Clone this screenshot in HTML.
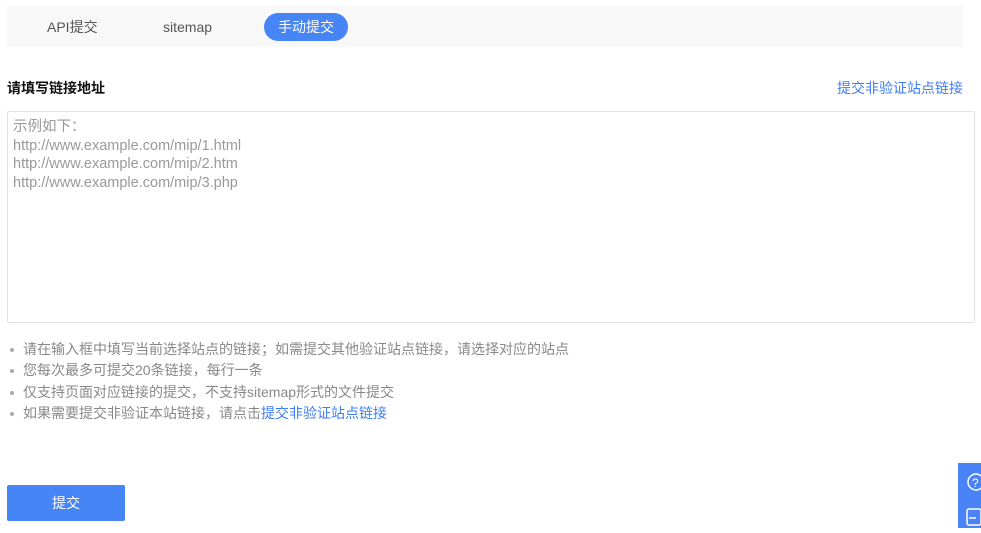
<!DOCTYPE html>
<html><head><meta charset="utf-8"><style>
body{margin:0;width:981px;height:528px;background:#fff;position:relative;overflow:hidden;font-family:"Liberation Sans","Noto Sans CJK SC",sans-serif;}
.tabs{position:absolute;left:7px;top:6px;width:956px;height:41px;background:#f8f8f8;}
.t{position:absolute;top:1px;line-height:41px;font-size:14px;color:#555;}
.pill{position:absolute;left:257px;top:7px;width:84px;height:28px;border-radius:14px;background:#4585f5;color:#fff;font-size:14px;line-height:28px;text-align:center;}
.lbl{position:absolute;left:7px;top:78px;font-size:14px;font-weight:bold;color:#111;}
.lnk{position:absolute;right:18px;top:78px;font-size:14px;color:#3f7ef5;}
.ta{position:absolute;left:7px;top:111px;width:966px;height:210px;border:1px solid #e2e2e2;border-radius:2px;}
.ta div{position:absolute;left:5px;top:6px;font-size:14.5px;line-height:18.5px;color:#999;}
ul{position:absolute;left:7px;top:339px;margin:0;padding:0;list-style:none;font-size:14px;color:#888;}
li{line-height:21.3px;padding-left:16px;position:relative;}
li:before{content:"";position:absolute;left:3px;top:9px;width:4px;height:4px;border-radius:50%;background:#aaa;}
li a{color:#3f7ef5;}
.btn{position:absolute;left:7px;top:485px;width:118px;height:36px;background:#4585f5;color:#fff;font-size:14px;line-height:36px;text-align:center;border-radius:2px;}
.side{position:absolute;left:958px;top:463px;width:23px;height:65px;background:#4a82f7;}
</style></head><body>
<div class="tabs"><span class="t" style="left:40px">API提交</span><span class="t" style="left:156px">sitemap</span><div class="pill">手动提交</div></div>
<div class="lbl">请填写链接地址</div>
<div class="lnk">提交非验证站点链接</div>
<div class="ta"><div>示例如下：<br>http://www.example.com/mip/1.html<br>http://www.example.com/mip/2.htm<br>http://www.example.com/mip/3.php</div></div>
<ul>
<li>请在输入框中填写当前选择站点的链接；如需提交其他验证站点链接，请选择对应的站点</li>
<li>您每次最多可提交20条链接，每行一条</li>
<li>仅支持页面对应链接的提交，不支持sitemap形式的文件提交</li>
<li>如果需要提交非验证本站链接，请点击<a>提交非验证站点链接</a></li>
</ul>
<div class="btn">提交</div>
<div class="side"><svg width="23" height="65"><circle cx="18" cy="19" r="8" fill="none" stroke="#fff" stroke-width="1.5"/><text x="14" y="24" fill="#fff" font-size="12" font-family="Liberation Sans">?</text><rect x="9" y="46" width="14" height="16" rx="2" fill="none" stroke="#fff" stroke-width="1.5"/><line x1="11" y1="55" x2="18" y2="55" stroke="#fff" stroke-width="1.5"/></svg></div>
</body></html>
